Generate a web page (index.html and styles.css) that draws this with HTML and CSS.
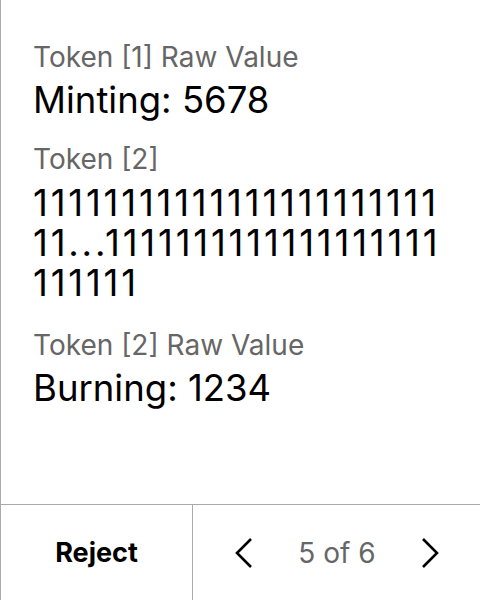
FILE: index.html
```html
<!DOCTYPE html>
<html>
<head>
<meta charset="utf-8">
<link rel="stylesheet" href="styles.css">
</head>
<body>
<div class="screen">
  <div class="content">
    <div class="field">
      <div class="label">Token [1] Raw Value</div>
      <div class="value">Minting: 5678</div>
    </div>
    <div class="field">
      <div class="label">Token [2]</div>
      <div class="value value-long">1111111111111111111111111...1111111111111111111111111</div>
    </div>
    <div class="field">
      <div class="label">Token [2] Raw Value</div>
      <div class="value">Burning: 1234</div>
    </div>
  </div>
  <div class="footer">
    <button class="reject">Reject</button>
    <div class="pager">
      <svg class="chev" width="20" height="32" viewBox="0 0 20 32"><path d="M17 2 L3 16 L17 30" fill="none" stroke="#000" stroke-width="2.6"/></svg>
      <span class="count">5 of 6</span>
      <svg class="chev" width="20" height="32" viewBox="0 0 20 32"><path d="M3 2 L17 16 L3 30" fill="none" stroke="#000" stroke-width="2.6"/></svg>
    </div>
  </div>
</div>
</body>
</html>
```
FILE: styles.css
```css
html, body {
  margin: 0;
  padding: 0;
  background: #fff;
}
.screen {
  width: 480px;
  height: 600px;
  box-sizing: border-box;
  border-left: 1px solid #aaa;
  display: flex;
  flex-direction: column;
  font-family: Inter, "Noto Sans", sans-serif;
}
.content {
  flex: 1;
  padding: 40px 32px 0 32px;
  display: flex;
  flex-direction: column;
  gap: 22px;
}
.label {
  font-size: 28px;
  line-height: 34px;
  color: #666;
  margin-bottom: 7px;
}
.value {
  font-size: 36.5px;
  line-height: 39px;
  color: #000;
  word-break: break-all;
  width: 415px;
}
.value-long {
  letter-spacing: 2.8px;
  line-height: 40px;
  margin-top: 5px;
  margin-bottom: 3px;
}
.footer {
  height: 96px;
  box-sizing: border-box;
  border-top: 1px solid #aaa;
  display: flex;
}
.reject {
  width: 192px;
  border: 0;
  border-right: 1px solid #aaa;
  background: #fff;
  font-family: Inter, "Noto Sans", sans-serif;
  font-weight: 700;
  font-size: 27px;
  color: #000;
  padding: 0;
}
.pager {
  flex: 1;
  display: flex;
  align-items: center;
  justify-content: space-between;
  padding: 0 40px 0 41px;
}
.count {
  font-size: 28px;
  color: #666;
}
```
